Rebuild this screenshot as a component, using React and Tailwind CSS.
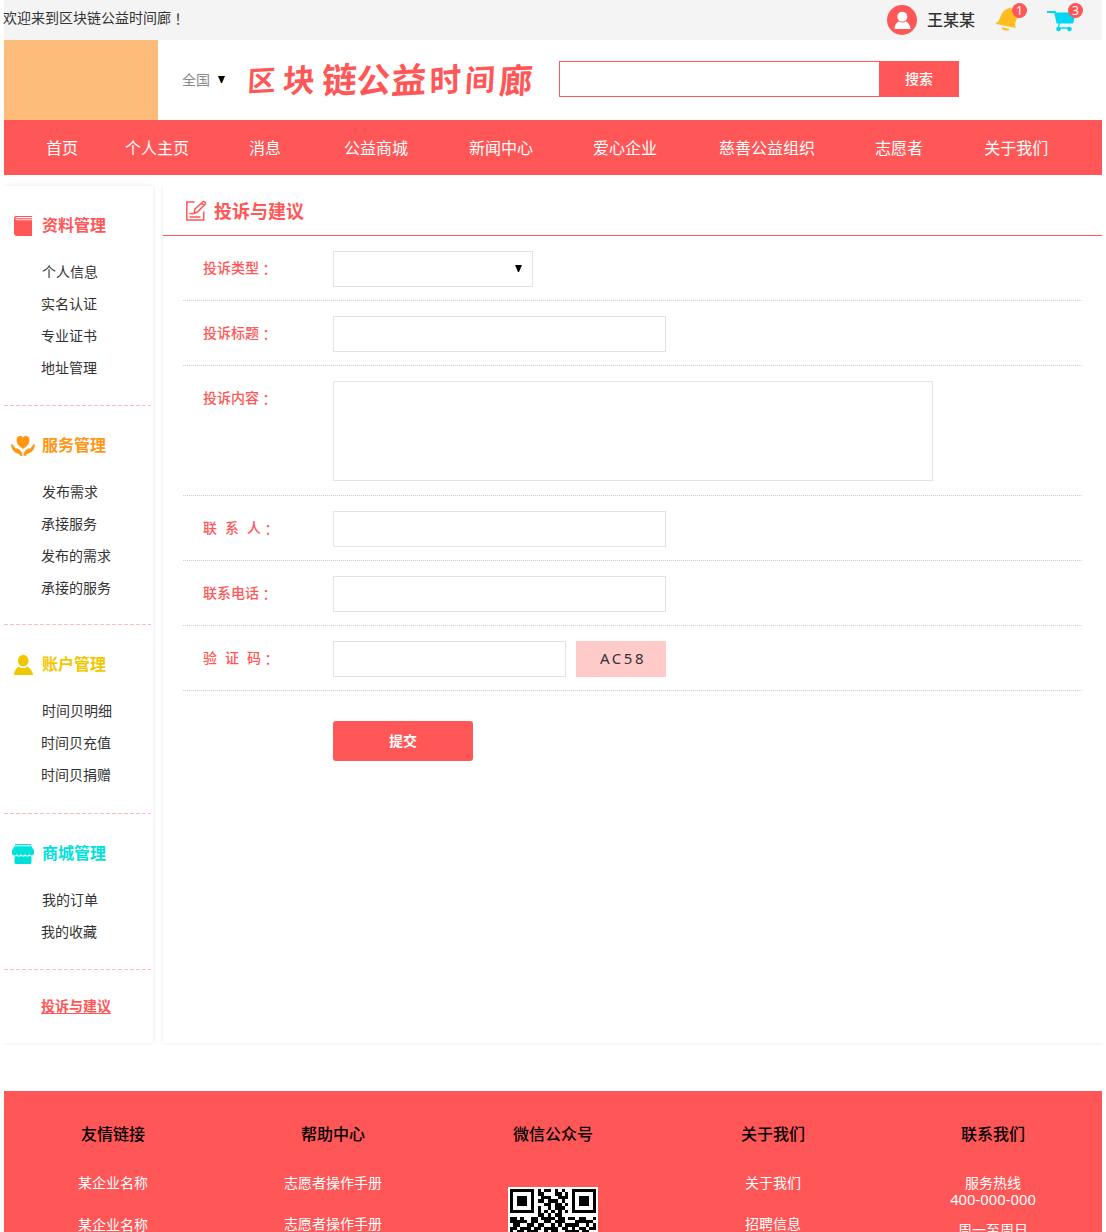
import React from "react";

const NAV = [
  ["首页", "ml-[42px]"],
  ["个人主页", "ml-[47px]"],
  ["消息", "ml-[60px]"],
  ["公益商城", "ml-[63px]"],
  ["新闻中心", "ml-[61px]"],
  ["爱心企业", "ml-[60px]"],
  ["慈善公益组织", "ml-[62px]"],
  ["志愿者", "ml-[60px]"],
  ["关于我们", "ml-[61px]"],
];

const BookIcon = () => (
  <svg width="24" height="24" viewBox="0 0 24 24">
    <path d="M5 2h16v1.200H6v1h15V22H6a3 3 0 0 1-3-3V4a2 2 0 0 1 2-2z" fill="#ff5757" />
    <path d="M21 3.500H6c-1.500 0-1.500 2.300 0 2.300h15" fill="none" stroke="#fff" strokeWidth=".8" />
  </svg>
);
const HandsIcon = () => (
  <svg width="24" height="24" viewBox="0 0 24 24" fill="#ff9614">
    <path d="M12 15C7.500 12 5.500 9.300 5.500 6.500C5.500 3.700 7 2 9 2c1.300 0 2.300.5 3 1.400C12.700 2.500 13.700 2 15 2c2 0 3.500 1.700 3.500 4.500C18.500 9.300 16.500 12 12 15z" />
    <path d="M0 10.500c1-.6 2 .2 2.600 1.200l2.200 3.100 1-.6c1.400.3 3.900 2 4.600 3.600.5 1.100 1.100 2.400 1.200 3.900H8.700v-1.200L4 18.300C1.500 16.700.3 13.500 0 10.500zM24 10.500c-1-.6-2 .2-2.600 1.200l-2.200 3.100-1-.6c-1.400.3-3.900 2-4.600 3.600-.5 1.100-1.100 2.400-1.200 3.900h2.900v-1.200l4.700-2.200c2.500-1.600 3.700-4.800 4-7.800z" />
  </svg>
);
const UserIcon = () => (
  <svg width="24" height="24" viewBox="0 0 24 24" fill="#f0c800">
    <ellipse cx="12.200" cy="7.700" rx="5.300" ry="5.900" />
    <path d="M3 22c0-3.500 2-6.600 4.800-8.400 1 1 2.500 1.500 4.200 1.500s3.200-.5 4.200-1.500C19 15.400 22 18.500 22 22z" />
  </svg>
);
const ShopIcon = () => (
  <svg width="24" height="24" viewBox="0 0 24 24" fill="#00e1dc">
    <path d="M4 2h16v1.300H4zM3.500 4.200h17L23 8.500v2.600c0 1.300-1 2.400-2.300 2.400-1.200 0-2-.7-2.300-1.500-.4.900-1.200 1.500-2.200 1.500s-1.700-.6-2.100-1.500c-.4.900-1.100 1.500-2.100 1.500s-1.700-.6-2.100-1.500c-.4.900-1.100 1.500-2.100 1.500s-1.800-.6-2.200-1.500c-.4.900-1.100 1.500-2.300 1.500C2 13.500 1 12.400 1 11.100V8.500z" />
    <path d="M3.500 14.500c1 .1 1.800-.2 2.300-.8 1.100 1.200 3.200 1.200 4.200 0 1.100 1.200 3.100 1.200 4.200 0 1 1.200 3.100 1.200 4.200 0 .5.600 1.200.9 2.100.8V20.500c0 .9-.6 1.500-1.500 1.500H5c-.9 0-1.500-.6-1.500-1.500z" />
  </svg>
);

const SECTIONS = [
  { title: "资料管理", Icon: BookIcon, color: "text-[#ff5757]", box: "h-[220px]", gap: "mt-[21px]", items: ["个人信息", "实名认证", "专业证书", "地址管理"] },
  { title: "服务管理", Icon: HandsIcon, color: "text-[#ff9614]", box: "h-[219px]", gap: "mt-5", items: ["发布需求", "承接服务", "发布的需求", "承接的服务"] },
  { title: "账户管理", Icon: UserIcon, color: "text-[#f0c800]", box: "h-[189px]", gap: "mt-[22px]", items: ["时间贝明细", "时间贝充值", "时间贝捐赠"] },
  { title: "商城管理", Icon: ShopIcon, color: "text-[#00e1dc]", box: "h-[156px]", gap: "mt-[21px]", items: ["我的订单", "我的收藏"] },
];

const Sidebar = () => (
  <aside className="h-[857px] w-[149px] bg-white shadow-[0_0_4px_rgba(0,0,0,0.1)]">
    {SECTIONS.map(({ title, Icon, color, box, gap, items }) => (
      <section key={title} className={box}>
        <div className="flex h-[70px] items-end pl-[7px]">
          <div className="flex h-[60px] items-center gap-[7px]">
            <Icon />
            <h2 className={`${color} -mt-[2px] text-[16px] leading-6 font-bold`}>{title}</h2>
          </div>
        </div>
        <ul className="text-[14px] leading-8">
          {items.map((t, i) => (
            <li key={t} className={i === 0 ? "pl-[38px]" : "pl-[37px]"}>{t}</li>
          ))}
        </ul>
        <div className={`${gap} h-px w-[147px] bg-[repeating-linear-gradient(90deg,#ffb9b9_0_4px,transparent_4px_6px)]`} />
      </section>
    ))}
    <a className="mt-[26px] ml-[37px] block w-fit text-[14px] leading-5 font-bold text-[#ff5757] underline decoration-1 underline-offset-2">投诉与建议</a>
  </aside>
);

const Row = ({ label, tall, wide, children }) => (
  <div className={`${tall ? "h-[130px]" : "h-[65px]"} flex pl-5`}>
    <label className={`${wide ? "[word-spacing:4.300px]" : ""} flex h-[42px] w-[130px] shrink-0 pt-[22px] text-[14px] leading-5 font-medium whitespace-pre text-[#ff5757]`}>
      <span>{label}</span>
      <span className="pt-px font-['Noto_Sans_CJK_TC',sans-serif]">：</span>
    </label>
    <div className="flex gap-[10px] pt-[15px]">{children}</div>
  </div>
);
const Divider = () => (
  <div className="-mt-px h-px bg-[repeating-linear-gradient(90deg,#d2d2d2_0_1px,#f8f8f8_1px_2px)]" />
);
const Down = () => (
  <svg width="7" height="7" viewBox="0 0 7 7"><path d="M0 0h7L4 7H3z" fill="#000" /></svg>
);

const QR = [
  "1111111010110101001111111",
  "1000001011000110101000001",
  "1011101001110011101011101",
  "1011101011011101001011101",
  "1011101000110110101011101",
  "1000001010010111001000001",
  "1111111010101010101111111",
  "0000000011010110000000000",
  "1101001101111011011011001",
  "1111101100110111000111110",
  "0110011011001010111100101",
  "1101110110111101101011011",
  "1011011100101100111101100",
  "0110101011100111010110101",
];
const QrCode = () => (
  <svg className="bg-white" width="90" height="90" viewBox="-0.6 -0.6 26.2 26.2" shapeRendering="crispEdges">
    {QR.flatMap((r, y) => [...r].map((c, x) => c === "1" && <rect key={`${x}-${y}`} x={x} y={y} width="1" height="1" />))}
  </svg>
);

const Column = ({ title, children }) => (
  <div className="w-[220px] shrink-0 text-center">
    <h3 className="pt-[31px] text-[16px] leading-6 font-medium text-black">{title}</h3>
    {children}
  </div>
);

const TITLE = [
  ["区", "w-[29px] text-[28px] -rotate-3"],
  ["块", "w-[46px] text-[32px] -rotate-3"],
  ["链", "w-[35px] text-[35px] -rotate-3"],
  ["公", "w-[33px] text-[34px] -rotate-6"],
  ["益", "w-[38px] text-[35px] -rotate-3"],
  ["时", "w-[35px] text-[32px] -rotate-6"],
  ["间", "w-[34px] text-[30px] -rotate-3"],
  ["廊", "w-[38px] text-[34px] -rotate-3"],
];

export default function App() {
  return (
    <div className="h-[1232px] overflow-hidden bg-white px-1 font-['Noto_Sans','Noto_Sans_CJK_SC',sans-serif] text-[#333]">
      <header className="flex h-10 items-center bg-[#f4f4f4]">
        <p className="-mt-1 -ml-px flex h-5 text-[14px] leading-5">
          <span>欢迎来到区块链公益时间廊</span>
          <span className="font-['Noto_Sans_CJK_TC',sans-serif]">！</span>
        </p>
        <div className="mr-[18px] ml-auto flex h-10 items-center">
          <svg width="30" height="30" viewBox="0 0 30 30">
            <circle cx="15" cy="15" r="15" fill="#ff5757" />
            <circle cx="15.300" cy="11.700" r="5" fill="#fff" />
            <path d="M7.500 24c0-4 2-6.500 4.300-7.800 2 1.800 5 1.800 7 0 2.300 1.300 4.700 3.800 4.700 7.800z" fill="#fff" />
          </svg>
          <span className="ml-[10px] text-[16px] leading-6 font-medium">王某某</span>
          <div className="relative ml-5 h-10 w-8">
            <svg className="mt-[6px]" width="27" height="26" viewBox="0 0 27 26" fill="#ffbe1e">
              <path d="M1 17.300C6.500 14.500 4.500 5 13 2.500c1-1.200 3-1 3.600.3 5 2 6.800 7.200 4.600 11.500-1.500 2.800-1.600 5.200-.3 7.700L1 18z" />
              <path d="M6.500 21.300l8 1.700c-1.500 2.700-7.500 2-8-1.700z" />
            </svg>
            <b className="absolute top-[3px] left-[17px] size-[15px] rounded-full bg-[#ff5757] text-center text-[12px] leading-[15px] font-normal text-white">1</b>
          </div>
          <div className="relative ml-5 h-10 w-[37px]">
            <svg className="mt-[9px]" width="32" height="24" viewBox="0 0 32 24">
              <path d="M0 3h8l2.500 11.500" fill="none" stroke="#00d7f5" strokeWidth="1.800" />
              <path d="M8 3.500h21L26 14.500H11z" fill="#00d7f5" />
              <path d="M12.500 14l-1.500 5H23" fill="none" stroke="#00d7f5" strokeWidth="1.300" />
              <circle cx="11.500" cy="20" r="2.300" fill="#00d7f5" /><circle cx="22.500" cy="20" r="2.300" fill="#00d7f5" />
            </svg>
            <b className="absolute top-[3px] left-[21px] size-[15px] rounded-full bg-[#ff5757] text-center text-[12px] leading-[15px] font-normal text-white">3</b>
          </div>
        </div>
      </header>

      <div className="flex h-20 items-center">
        <div className="h-20 w-[154px] bg-[#fdbc7a]" />
        <span className="ml-6 text-[14px] leading-5 text-[#888]">全国</span>
        <span className="mr-[22px] ml-2 pb-[2px]"><Down /></span>
        <h1 className="flex h-12 w-[292px] items-center text-[#ff5757]">
          {TITLE.map(([c, s]) => (
            <span key={c} className={`${s} flex shrink-0 -skew-x-6 justify-center leading-[48px] font-bold`}>{c}</span>
          ))}
        </h1>
        <div className="-mt-[2px] ml-5 flex h-9">
          <input aria-label="搜索" className="w-[320px] border border-r-0 border-[#ff5757]" />
          <button className="w-20 bg-[#ff5757] pb-px text-[14px] font-medium text-white">搜索</button>
        </div>
      </div>

      <nav className="flex h-[55px] items-center bg-[#ff5757] text-[16px] leading-6 whitespace-nowrap text-white">
        {NAV.map(([t, m]) => <a key={t} className={m}>{t}</a>)}
      </nav>

      <div className="flex h-[916px] gap-[10px] overflow-hidden pt-[11px]">
        <Sidebar />
        <main className="h-[857px] w-[939px] bg-white shadow-[0_0_4px_rgba(0,0,0,0.1)]">
          <div className="relative -mt-[11px] flex h-[61px] items-center border-b border-[#ff5757] bg-white pt-[11px] pl-[22px]">
            <svg width="22" height="22" viewBox="0 0 22 22" fill="none" stroke="#ff5757" strokeWidth="1.500">
              <path d="M9.500 2H1.800v18h16.900v-8.500M4.500 17h11M4.500 13.500h3.500" />
              <path d="M9 13.500l1-4.500 8-7.300c1-.8 3.300 1 2.200 2.300L12.500 12zM16.500 3l2.500 2.500" />
            </svg>
            <h2 className="ml-[7px] text-[18px] leading-6 font-bold text-[#ff5757]">投诉与建议</h2>
          </div>
          <form className="ml-5 w-[899px]">
            <Row label="投诉类型">
              <div className="flex h-9 w-[200px] items-center justify-end border border-[#e3e3e3] pr-[10px] pb-px"><Down /></div>
            </Row>
            <Divider />
            <Row label="投诉标题"><input aria-label="投诉标题" className="h-9 w-[333px] border border-[#e3e3e3]" /></Row>
            <Divider />
            <Row label="投诉内容" tall><textarea aria-label="投诉内容" className="h-[100px] w-[600px] resize-none border border-[#e3e3e3]" /></Row>
            <Divider />
            <Row label="联 系 人" wide><input aria-label="联系人" className="h-9 w-[333px] border border-[#e3e3e3]" /></Row>
            <Divider />
            <Row label="联系电话"><input aria-label="联系电话" className="h-9 w-[333px] border border-[#e3e3e3]" /></Row>
            <Divider />
            <Row label="验 证 码" wide>
              <input aria-label="验证码" className="h-9 w-[233px] border border-[#e3e3e3]" />
              <div className="flex h-9 w-[90px] items-center justify-center bg-[#ffcaca] pb-[2px] pl-1 text-[15px] tracking-[2.500px]">AC58</div>
            </Row>
            <Divider />
            <button className="mt-[30px] ml-[150px] h-10 w-[140px] rounded-[3px] bg-[#ff5757] pb-[2px] text-[14px] font-bold text-white">提交</button>
          </form>
        </main>
      </div>

      <footer className="h-[141px] overflow-hidden bg-[#ff5757]">
        <div className="-ml-px flex text-[14px] text-white">
          <Column title="友情链接">
            <p className="mt-[27px] leading-5">某企业名称</p>
            <p className="mt-[22px] leading-5">某企业名称</p>
          </Column>
          <Column title="帮助中心">
            <p className="mt-[27px] leading-5">志愿者操作手册</p>
            <p className="mt-[21px] leading-5">志愿者操作手册</p>
          </Column>
          <Column title="微信公众号">
            <div className="mt-[41px] flex justify-center"><QrCode /></div>
          </Column>
          <Column title="关于我们">
            <p className="mt-[27px] leading-5">关于我们</p>
            <p className="mt-[21px] leading-5">招聘信息</p>
          </Column>
          <Column title="联系我们">
            <p className="mt-[29px] leading-4">服务热线</p>
            <p className="text-[14.800px] leading-4">400-000-000</p>
            <p className="mt-[13px] leading-5">周一至周日</p>
          </Column>
        </div>
      </footer>
    </div>
  );
}
